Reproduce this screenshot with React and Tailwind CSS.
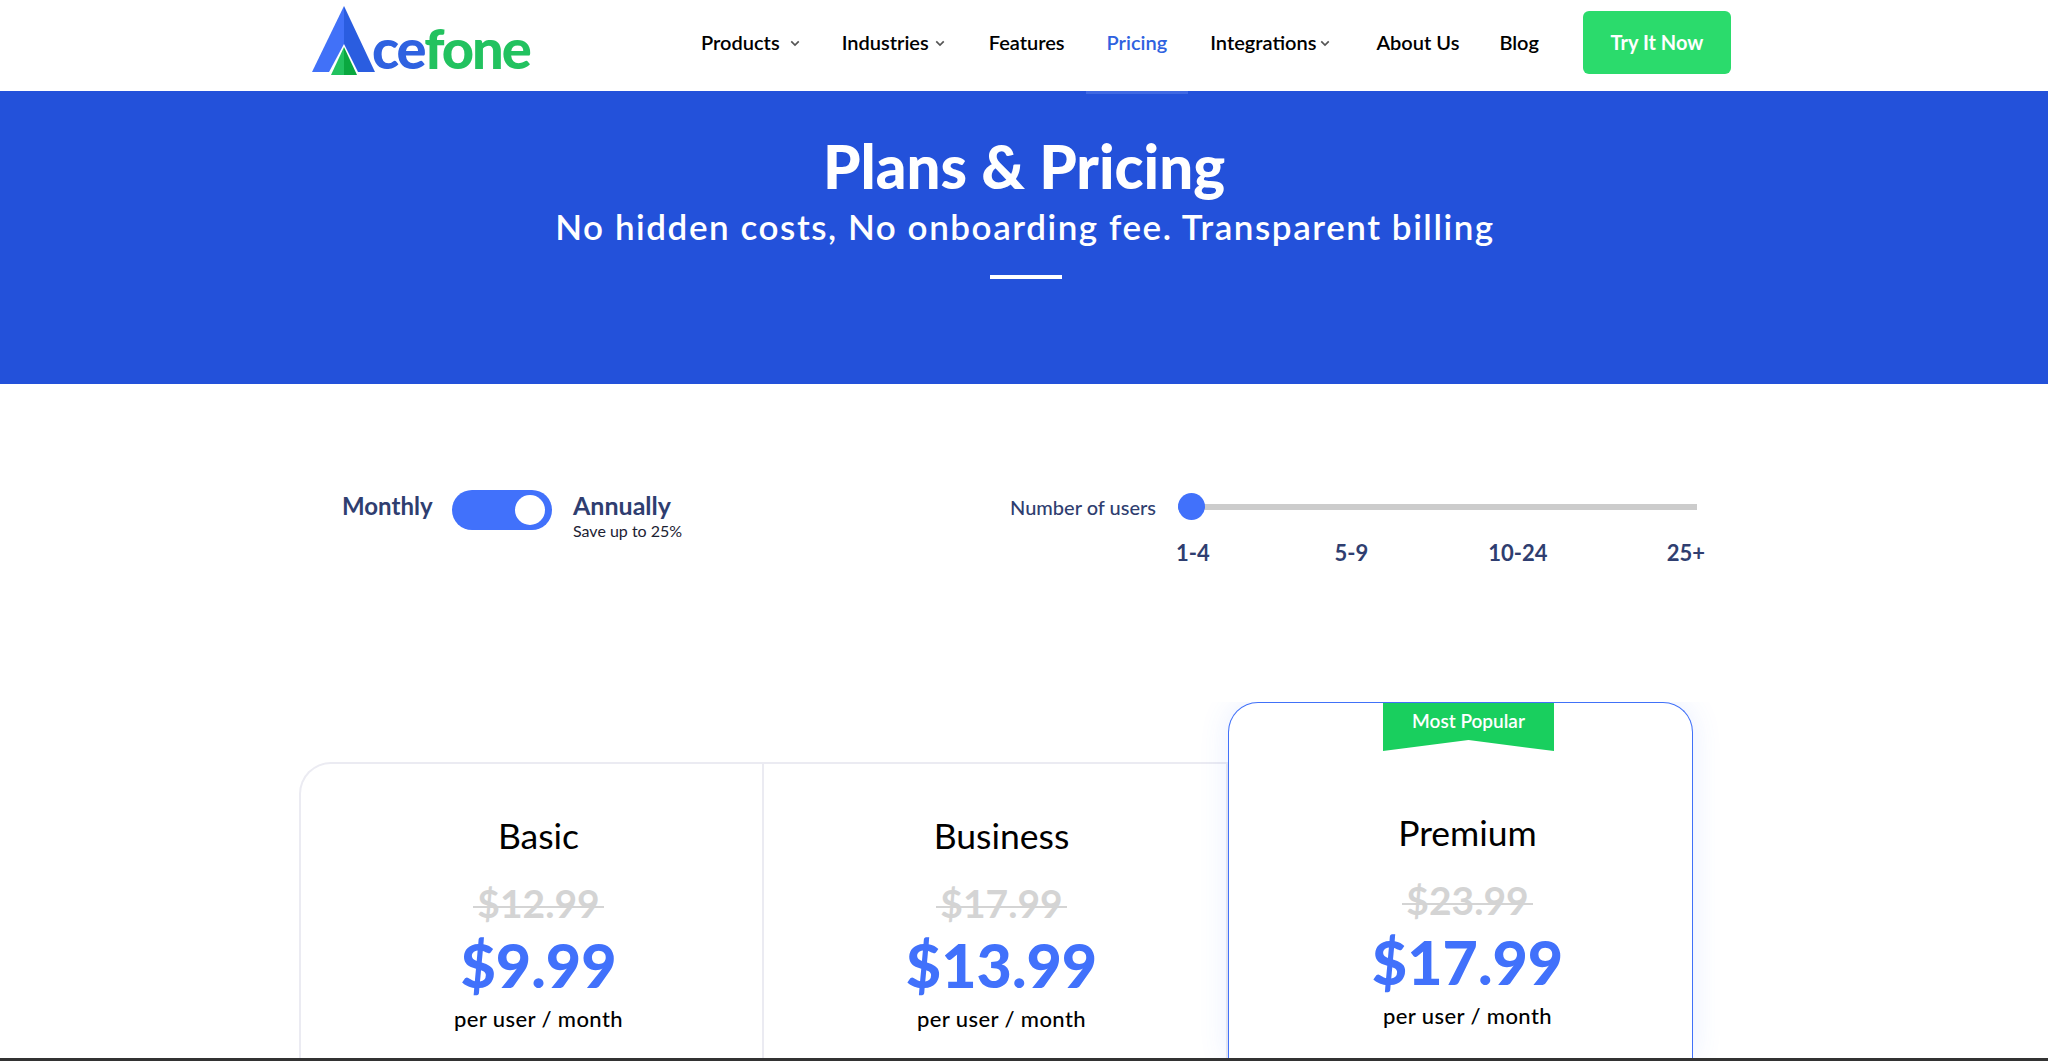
import React from "react";

const font = { fontFamily: '"Lato", "Open Sans", sans-serif' };

function Chevron({ className }) {
  return (
    <svg viewBox="0 0 12 8" className={className} fill="none" stroke="#555" strokeWidth="2">
      <path d="M1.5 1.5 6 6l4.5-4.5" />
    </svg>
  );
}

function Logo() {
  return (
    <div className="relative w-[219px] h-[70px] mt-[6px] ml-[312px] shrink-0">
      <svg viewBox="0 0 82 70" className="absolute left-0 top-0 w-[82px] h-[70px]">
        <polygon points="32,0 0,66 17,66 32,38" fill="#4171f8" />
        <polygon points="32,0 63,66 46,66 32,38" fill="#2a5de0" />
        <polygon points="32,41 19,69 32,69" fill="#22c25f" />
        <polygon points="32,41 45,69 32,69" fill="#0aa83f" />
      </svg>
      <div className="absolute left-[60px] top-[14px] text-[56px] leading-[56px] font-black tracking-[-2px] whitespace-nowrap">
        <span className="text-[#2f62e0]">ce</span>
        <span className="text-[#22c25f]">fone</span>
      </div>
    </div>
  );
}

function NavItem({ children, chevron, ml, color = "text-black", gap = "ml-[11px]" }) {
  return (
    <div className={`flex items-center text-[20px] font-semibold whitespace-nowrap ${color} ${ml}`}>
      <span>{children}</span>
      {chevron && <Chevron className={`w-[10px] h-[7px] mt-[3px] ${gap}`} />}
    </div>
  );
}

function Header() {
  return (
    <header className="h-[91px] bg-white flex items-start shrink-0 relative">
      <Logo />
      <nav className="flex items-center h-[84px] ml-[170px]">
        <NavItem chevron ml="ml-0" gap="ml-[10px]">Products</NavItem>
        <NavItem chevron ml="ml-[42px]" gap="ml-[6px]">Industries</NavItem>
        <NavItem ml="ml-[44px]">Features</NavItem>
        <NavItem ml="ml-[42px]" color="text-[#2f62e0]">Pricing</NavItem>
        <NavItem chevron ml="ml-[43px]" gap="ml-[4px]">Integrations</NavItem>
        <NavItem ml="ml-[46px]">About Us</NavItem>
        <NavItem ml="ml-[40px]">Blog</NavItem>
        <div className="ml-[44px] w-[148px] h-[63px] bg-[#2bdb6c] rounded-[6px] flex items-center justify-center text-white text-[20px] font-bold">
          Try It Now
        </div>
      </nav>
    </header>
  );
}

function Hero() {
  return (
    <section className="relative h-[293px] bg-[#2351da] flex flex-col items-center text-white shrink-0">
      <div className="absolute left-[1086px] top-0 w-[102px] h-[3px] bg-[#3f68e2]" />
      <h1 className="text-[60px] leading-[70px] font-black mt-[40px]">Plans &amp; Pricing</h1>
      <p className="text-[35px] leading-[40px] font-semibold tracking-[1.55px] mt-[5px] pl-[2px]">
        No hidden costs, No onboarding fee. Transparent billing
      </p>
      <div className="w-[72px] h-[4px] bg-white mt-[29px] ml-[4px]" />
    </section>
  );
}

function Controls() {
  return (
    <section className="flex items-start h-[318px] pt-[106px] pl-[342px] shrink-0">
      <div className="text-[24px] leading-[29px] font-bold text-[#2f3e70] w-[90px] whitespace-nowrap mt-[1px]">Monthly</div>
      <div className="ml-[20px] w-[100px] h-[40px] rounded-full bg-[#4171fb] flex items-center justify-end pr-[7px]">
        <div className="w-[30px] h-[30px] rounded-full bg-white" />
      </div>
      <div className="ml-[21px] w-[120px] mt-[1px]">
        <div className="text-[25px] leading-[29px] font-bold text-[#2f3e70] whitespace-nowrap">Annually</div>
        <div className="text-[16px] leading-[18px] text-[#1c2233] whitespace-nowrap mt-[2px]">Save up to 25%</div>
      </div>
      <div className="ml-[317px] w-[695px]">
        <div className="flex items-center h-[34px]">
          <div className="w-[168px] text-[20px] font-medium text-[#2f3e70] whitespace-nowrap">Number of users</div>
          <div className="relative w-[519px] h-[6px] bg-[#cccccc]">
            <div className="absolute left-0 top-[-11px] w-[27px] h-[27px] rounded-full bg-[#4171fb]" />
          </div>
        </div>
        <div className="flex w-[529px] ml-[166px] mt-[16px] text-[22px] leading-[26px] font-bold text-[#2f3e70]">
          <span className="w-[160px]">1-4</span>
          <span className="w-[155px]">5-9</span>
          <span className="w-[180px]">10-24</span>
          <span>25+</span>
        </div>
      </div>
    </section>
  );
}

function PlanBody({ name, old, price }) {
  return (
    <div className="flex flex-col items-center pl-[14px]">
      <div className="text-[35.5px] leading-[40px] text-black">{name}</div>
      <div className="relative mt-[23px] text-[39px] leading-[48px] font-bold text-[#d4d4d4] px-[4px]">
        {old}
        <div className="absolute left-0 right-0 top-[27px] h-[2px] bg-[#d4d4d4]" />
      </div>
      <div className="text-[61px] leading-[70px] font-black text-[#4171fb] mt-[3px]">{price}</div>
      <div className="text-[22px] leading-[26px] font-medium tracking-[0.4px] text-black mt-[6px]">per user / month</div>
    </div>
  );
}

function Plans() {
  return (
    <section className="flex items-stretch pl-[299px] flex-1 min-h-0 overflow-hidden">
      <div className="w-[465px] mt-[60px] pt-[52px] border-t-2 border-l-2 border-r-2 border-[#ebebf2] rounded-tl-[32px]">
        <PlanBody name="Basic" old="$12.99" price="$9.99" />
      </div>
      <div className="w-[465px] mt-[60px] pt-[52px] border-t-2 border-r-2 border-[#ebebf2] -ml-[1px]">
        <PlanBody name="Business" old="$17.99" price="$13.99" />
      </div>
      <div className="relative w-[465px] pt-[110px] border border-b-0 border-[#4171f8] rounded-t-[30px] bg-white shadow-[0_0_30px_rgba(65,113,251,0.12)]">
        <div
          className="absolute left-[154px] top-0 w-[171px] h-[48px] bg-[#19cf5e] flex justify-center pt-[7px] text-white text-[19px] leading-[21px] font-semibold"
          style={{ clipPath: "polygon(0 0,100% 0,100% 100%,50% 77%,0 100%)" }}
        >
          Most Popular
        </div>
        <PlanBody name="Premium" old="$23.99" price="$17.99" />
      </div>
    </section>
  );
}

export default function App() {
  return (
    <div style={font} className="h-screen w-full bg-white flex flex-col overflow-hidden">
      <Header />
      <Hero />
      <Controls />
      <Plans />
      <div className="h-[3px] bg-[#333333] shrink-0 relative" />
    </div>
  );
}
